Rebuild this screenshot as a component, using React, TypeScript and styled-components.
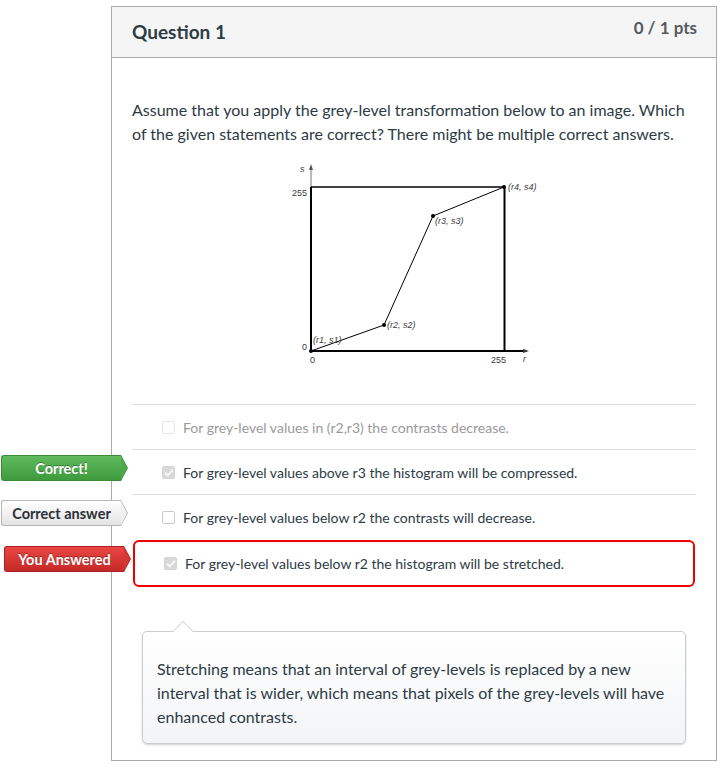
import React from "react";
import styled, { createGlobalStyle, css } from "styled-components";

const GlobalStyle = createGlobalStyle`
  body {
    margin: 0;
    background: #ffffff;
    font-family: Lato, "Open Sans", sans-serif;
    color: #2d3b45;
  }
`;

const Page = styled.div`
  padding: 6px 0 8px 111px;
`;

const Card = styled.div`
  width: 606px;
  box-sizing: border-box;
  border: 1px solid #aaaaaa;
`;

const Header = styled.div`
  height: 50px;
  display: flex;
  justify-content: space-between;
  align-items: flex-start;
  padding: 0 19px 0 20px;
  background: #f5f5f5;
  border-bottom: 1px solid #aaaaaa;
`;

const Title = styled.h2`
  margin: 13px 0 0;
  font-size: 19px;
  line-height: 24px;
  font-weight: 700;
  color: #2d3b45;
`;

const Points = styled.div`
  margin-top: 10px;
  font-size: 17px;
  line-height: 22px;
  font-weight: 700;
  color: #555a5e;
`;

const Body = styled.div`
  padding: 40px 20px 16px;
`;

const QuestionText = styled.p`
  margin: 0;
  font-size: 16px;
  line-height: 24px;
  color: #2d3b45;
`;

const Figure = styled.div`
  display: flex;
  justify-content: center;
  margin-top: 16px;
`;

const Answers = styled.div`
  margin-top: 36px;
`;

const AnswerRow = styled.div<{ $wrong?: boolean }>`
  position: relative;
  display: flex;
  align-items: center;
  gap: 8px;
  box-sizing: border-box;
  height: 45px;
  padding-left: 30px;
  border-top: 1px solid #dddddd;
  ${(p) =>
    p.$wrong &&
    css`
      height: 47px;
      margin: 1px 1px 0;
      padding-left: 29px;
      border: 2px solid #ee0000;
      border-radius: 6px;
    `}
`;

const AnswerText = styled.span<{ $muted?: boolean }>`
  font-size: 14px;
  color: ${(p) => (p.$muted ? "#9a9a9a" : "#2d3b45")};
`;

const Box = styled.span<{ $checked?: boolean; $faint?: boolean }>`
  display: inline-flex;
  align-items: center;
  justify-content: center;
  width: 13px;
  height: 13px;
  box-sizing: border-box;
  border-radius: 2px;
  border: 1px solid ${(p) => (p.$checked ? "#d4d4d4" : p.$faint ? "#e6e6e6" : "#c9c9c9")};
  background: ${(p) => (p.$checked ? "#d9d9d9" : "#ffffff")};
`;

const labelColors = {
  green: { top: "#5fba5d", bottom: "#3e9b3c", border: "#3a8b38", text: "#ffffff" },
  grey: { top: "#ffffff", bottom: "#e3e3e3", border: "#b5b5b5", text: "#2d3035" },
  red: { top: "#ea4643", bottom: "#c42a27", border: "#a82220", text: "#ffffff" },
};

type Tone = keyof typeof labelColors;

const Label = styled.div<{ $tone: Tone }>`
  position: absolute;
  right: calc(100% + 11px);
  top: ${(p) => (p.$tone === "red" ? "4px" : "5px")};
  width: 120px;
  height: 26px;
  box-sizing: border-box;
  display: flex;
  align-items: center;
  justify-content: center;
  border: 1px solid ${(p) => labelColors[p.$tone].border};
  border-right: none;
  border-radius: 3px 0 0 3px;
  background: linear-gradient(
    ${(p) => labelColors[p.$tone].top},
    ${(p) => labelColors[p.$tone].bottom}
  );
  color: ${(p) => labelColors[p.$tone].text};
  font-size: 14.5px;
  font-weight: 700;
  text-shadow: ${(p) => (p.$tone === "grey" ? "none" : "0 -1px 0 rgba(0,0,0,0.35)")};

  &::before,
  &::after {
    content: "";
    position: absolute;
    top: -1px;
    width: 0;
    height: 0;
    border-top: 13px solid transparent;
    border-bottom: 13px solid transparent;
  }
  &::before {
    right: -7px;
    border-left: 7px solid ${(p) => labelColors[p.$tone].border};
  }
  &::after {
    right: -6px;
    top: 0px;
    border-top-width: 12px;
    border-bottom-width: 12px;
    border-left: 6px solid
      ${(p) =>
        p.$tone === "grey" ? "#efefef" : p.$tone === "green" ? "#4eaa4c" : "#d63734"};
  }
`;

const Comment = styled.div`
  position: relative;
  margin: 44px 10px 0;
  padding: 25px 14px 14px;
  border: 1px solid #c7cdd1;
  border-radius: 5px;
  background: linear-gradient(#ffffff, #f3f4f6);
  box-shadow: 0 1px 2px rgba(0, 0, 0, 0.18);
  font-size: 16px;
  line-height: 24px;
  color: #2d3b45;

  &::before,
  &::after {
    content: "";
    position: absolute;
    left: 29px;
    width: 0;
    height: 0;
    border-left: 11px solid transparent;
    border-right: 11px solid transparent;
  }
  &::before {
    top: -11px;
    border-bottom: 11px solid #c7cdd1;
  }
  &::after {
    top: -10px;
    border-bottom: 11px solid #ffffff;
  }
`;

const Check = () => (
  <svg width="10" height="9" viewBox="0 0 10 9">
    <path d="M1 4.6 L3.8 7.4 L9 1.6" fill="none" stroke="#f7f7f7" strokeWidth="2" />
  </svg>
);

const Graph = () => (
  <svg width="260" height="206" viewBox="283 162 260 206">
    <g fontFamily="'Liberation Sans', Arial, sans-serif" fontSize="9" fill="#3a3a3a">
      <line x1="310" y1="168" x2="310" y2="187" stroke="#777" strokeWidth="1" />
      <polygon points="308,170 310,164 312,170" fill="#555" />
      <line x1="310" y1="187" x2="310" y2="352" stroke="#000" strokeWidth="2" />
      <line x1="310" y1="351" x2="524" y2="351" stroke="#000" strokeWidth="2" />
      <polygon points="522,349 528,351 522,353" fill="#333" />
      <line x1="310" y1="187" x2="504" y2="187" stroke="#000" strokeWidth="1.6" />
      <line x1="503.5" y1="187" x2="503.5" y2="351" stroke="#000" strokeWidth="2" />
      <polyline
        points="310,351 383,325 432,216 503,187"
        fill="none"
        stroke="#000"
        strokeWidth="1"
      />
      <circle cx="310" cy="351" r="2" fill="#000" />
      <circle cx="383" cy="325" r="2" fill="#000" />
      <circle cx="432" cy="216" r="2" fill="#000" />
      <circle cx="503" cy="187" r="2" fill="#000" />
      <text x="299" y="172" fontStyle="italic">s</text>
      <text x="291" y="196">255</text>
      <text x="301" y="350">0</text>
      <text x="309" y="363">0</text>
      <text x="490" y="363">255</text>
      <text x="522" y="362" fontStyle="italic">r</text>
      <text x="507" y="190" fontStyle="italic">(r4, s4)</text>
      <text x="434" y="224" fontStyle="italic">(r3, s3)</text>
      <text x="386" y="328" fontStyle="italic">(r2, s2)</text>
      <text x="312" y="343" fontStyle="italic">(r1, s1)</text>
    </g>
  </svg>
);

type Answer = {
  text: string;
  checked?: boolean;
  muted?: boolean;
  wrong?: boolean;
  label?: { tone: Tone; text: string };
};

const answers: Answer[] = [
  { text: "For grey-level values in (r2,r3) the contrasts decrease.", muted: true },
  {
    text: "For grey-level values above r3 the histogram will be compressed.",
    checked: true,
    label: { tone: "green", text: "Correct!" },
  },
  {
    text: "For grey-level values below r2 the contrasts will decrease.",
    label: { tone: "grey", text: "Correct answer" },
  },
  {
    text: "For grey-level values below r2 the histogram will be stretched.",
    checked: true,
    wrong: true,
    label: { tone: "red", text: "You Answered" },
  },
];

export default function App() {
  return (
    <>
      <GlobalStyle />
      <Page>
        <Card>
          <Header>
            <Title>Question 1</Title>
            <Points>0 / 1 pts</Points>
          </Header>
          <Body>
            <QuestionText>
              Assume that you apply the grey-level transformation below to an image. Which of the
              given statements are correct? There might be multiple correct answers.
            </QuestionText>
            <Figure>
              <Graph />
            </Figure>
            <Answers>
              {answers.map((a) => (
                <AnswerRow key={a.text} $wrong={a.wrong}>
                  {a.label && <Label $tone={a.label.tone}>{a.label.text}</Label>}
                  <Box $checked={a.checked} $faint={a.muted}>
                    {a.checked && <Check />}
                  </Box>
                  <AnswerText $muted={a.muted}>{a.text}</AnswerText>
                </AnswerRow>
              ))}
            </Answers>
            <Comment>
              Stretching means that an interval of grey-levels is replaced by a new interval that is
              wider, which means that pixels of the grey-levels will have enhanced contrasts.
            </Comment>
          </Body>
        </Card>
      </Page>
    </>
  );
}
